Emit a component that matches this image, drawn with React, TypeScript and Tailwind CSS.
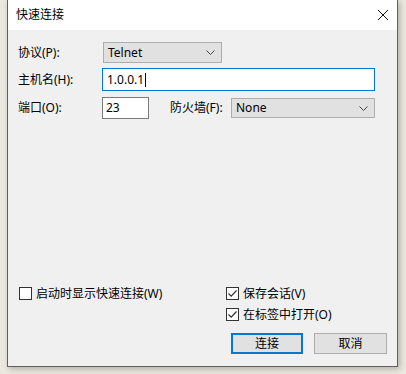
import React from 'react';

const font = "font-['Noto_Sans','Noto_Sans_CJK_SC',sans-serif]";

const Chevron = () => (
  <svg width="9" height="5" viewBox="0 0 9 5" className="shrink-0">
    <path d="M0.5 0.5 L4.5 4.5 L8.5 0.5" fill="none" stroke="#444" strokeWidth="1" />
  </svg>
);

const Select = ({ value, className }: { value: string; className: string }) => (
  <div
    className={`flex items-center justify-between border border-[#adadad] bg-[#e1e1e1] pl-[4px] pr-[6px] text-[12px] text-black ${className}`}
  >
    <span>{value}</span>
    <Chevron />
  </div>
);

const Check = ({ checked, label }: { checked: boolean; label: string }) => (
  <label className="flex h-[13px] items-center gap-[4px] text-[12px] text-black">
    <span className="flex h-[13px] w-[13px] items-center justify-center border border-[#333] bg-white">
      {checked && (
        <svg width="11" height="11" viewBox="0 0 11 11">
          <path d="M1.5 5.5 L4.2 8.2 L9.5 2.5" fill="none" stroke="#333" strokeWidth="1.2" />
        </svg>
      )}
    </span>
    <span>{label}</span>
  </label>
);

export default function App() {
  return (
    <div className={`h-[374px] w-[406px] overflow-hidden bg-[#ebe8df] ${font}`}>
      <div className="ml-[7px] flex h-[367px] w-[391px] flex-col border-x border-b border-[#5f5f5f] bg-[#f0f0f0] shadow-[2px_2px_6px_rgba(0,0,0,0.25)]">
        {/* title bar */}
        <div className="flex h-[30px] items-center justify-between bg-white pl-[8px] pr-[8px]">
          <span className="text-[12px] text-black">快速连接</span>
          <svg width="12" height="12" viewBox="0 0 12 12">
            <path d="M1 1 L11 11 M11 1 L1 11" stroke="#111" strokeWidth="1" />
          </svg>
        </div>

        {/* form */}
        <div className="flex flex-1 flex-col pl-[10px] pt-[12px] pb-[12px] text-[12px] text-black">
          <div className="flex h-[21px] items-center">
            <span className="w-[85px]">协议(P):</span>
            <Select value="Telnet" className="h-[21px] w-[119px]" />
          </div>

          <div className="mt-[5px] flex h-[23px] items-center">
            <span className="w-[84px]">主机名(H):</span>
            <div className="flex h-[23px] w-[273px] items-center border border-[#0078d7] bg-white pl-[4px]">
              <span>1.0.0.1</span>
              <span className="ml-[1px] h-[14px] w-px bg-black" />
            </div>
          </div>

          <div className="mt-[6px] flex h-[22px] items-center">
            <span className="w-[84px]">端口(O):</span>
            <div className="flex h-[22px] w-[47px] items-center border border-[#7a7a7a] bg-white pl-[3px]">
              23
            </div>
            <span className="ml-[21px] w-[61px]">防火墙(F):</span>
            <Select value="None" className="h-[20px] w-[144px]" />
          </div>

          <div className="flex-1" />

          <div className="flex pl-[1px]">
            <div className="w-[207px]">
              <Check checked={false} label="启动时显示快速连接(W)" />
            </div>
            <div className="flex flex-col gap-[8px]">
              <Check checked label="保存会话(V)" />
              <Check checked label="在标签中打开(O)" />
            </div>
          </div>

          <div className="mt-[12px] flex justify-end gap-[11px] pr-[10px]">
            <button className="flex h-[21px] w-[72px] items-center justify-center border-2 border-[#0078d7] bg-[#e1e1e1] text-[12px]">
              连接
            </button>
            <button className="flex h-[21px] w-[73px] items-center justify-center border border-[#adadad] bg-[#e1e1e1] text-[12px]">
              取消
            </button>
          </div>
        </div>
      </div>
    </div>
  );
}
